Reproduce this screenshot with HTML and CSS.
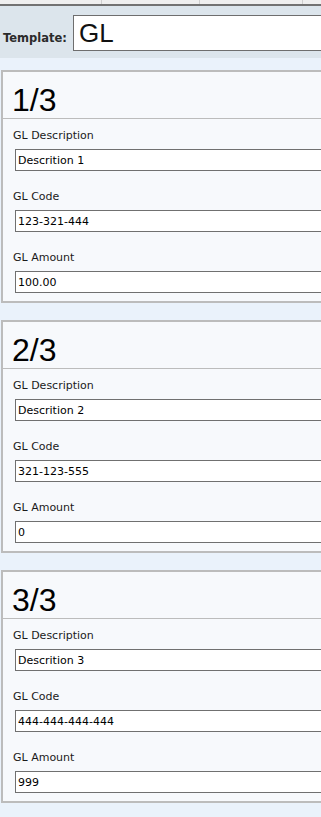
FILE: index.html
```html
<!DOCTYPE html>
<html lang="en">
<head>
  <meta charset="UTF-8" />
  <meta name="viewport" content="width=device-width, initial-scale=1" />
  <title>GL Template</title>
  <link rel="stylesheet" href="styles.css">
</head>
<body>

  <div class="tabs">
    <div class="tab tab-1"></div>
    <div class="tab tab-2"></div>
    <div class="tab tab-3"></div>
  </div>

  <div class="template-bar">
    <label for="template" class="template-label">Template:</label>
    <input type="text" id="template" class="template-input" value="GL" />
  </div>

  <div class="entries">

    <div class="entry">
      <h1 class="entry-title">1/3</h1>
      <div class="entry-fields">
        <label class="field-label">GL Description</label>
        <input type="text" class="field-input" value="Descrition 1" />
        <label class="field-label">GL Code</label>
        <input type="text" class="field-input" value="123-321-444" />
        <label class="field-label">GL Amount</label>
        <input type="text" class="field-input" value="100.00" />
      </div>
    </div>

    <div class="entry">
      <h1 class="entry-title">2/3</h1>
      <div class="entry-fields">
        <label class="field-label">GL Description</label>
        <input type="text" class="field-input" value="Descrition 2" />
        <label class="field-label">GL Code</label>
        <input type="text" class="field-input" value="321-123-555" />
        <label class="field-label">GL Amount</label>
        <input type="text" class="field-input" value="0" />
      </div>
    </div>

    <div class="entry">
      <h1 class="entry-title">3/3</h1>
      <div class="entry-fields">
        <label class="field-label">GL Description</label>
        <input type="text" class="field-input" value="Descrition 3" />
        <label class="field-label">GL Code</label>
        <input type="text" class="field-input" value="444-444-444-444" />
        <label class="field-label">GL Amount</label>
        <input type="text" class="field-input" value="999" />
      </div>
    </div>

  </div>

</body>
</html>
```

FILE: styles.css
```css
/* Base */
* { box-sizing: border-box; }
html, body { overflow: hidden; }
body {
  margin: 0;
  background: #eaf2fb;
  color: #1a1a1a;
  font-family: 'DejaVu Sans', Verdana, sans-serif;
  font-size: 11px;
}

/* Tab strip (mostly scrolled off the top) */
.tabs {
  display: flex;
  height: 6px;
  background: #efefef;
  border-bottom: 2px solid #727272;
}
.tab { border-right: 1px solid #cfcfcf; }
.tab-1 { width: 102px; }
.tab-2 { width: 98px; }
.tab-3 { width: 103px; }

/* Template row */
.template-bar {
  display: flex;
  align-items: baseline;
  gap: 6px;
  background: #dce5ec;
  padding: 9px 0 7px 3px;
  width: 420px;
}
.template-label {
  font-weight: bold;
  font-size: 11.5px;
  color: #2b2b2b;
}
.template-input {
  width: 320px;
  height: 36px;
  margin: 0;
  padding: 0 5px;
  border: 1px solid #6e6e6e;
  background: #fff;
  font-family: 'Liberation Sans', Arial, sans-serif;
  font-size: 26px;
  color: #111;
  outline: none;
}

/* Entry cards */
.entries {
  padding: 12px 0 0 1px;
}
.entry {
  width: 380px;
  margin-bottom: 17px;
  background: #f7f9fc;
  border: 2px solid #bcbcbc;
}
.entry-title {
  margin: 0;
  padding: 11px 0 0 9px;
  height: 47px;
  line-height: 35px;
  font-family: 'Liberation Sans', Arial, sans-serif;
  font-size: 32px;
  font-weight: normal;
  color: #000;
  border-bottom: 1px solid #bcbcbc;
}
.entry-fields {
  display: flex;
  flex-direction: column;
  align-items: flex-start;
  padding: 10px 0 8px 10px;
}
.field-label {
  display: block;
  line-height: 13px;
  margin-bottom: 7px;
  color: #1a1a1a;
}
.field-input {
  width: 340px;
  height: 22px;
  margin: 0 0 19px 2px;
  padding: 0 2px;
  border: 1px solid #707070;
  background: #fff;
  font-family: 'DejaVu Sans', Verdana, sans-serif;
  font-size: 11px;
  color: #000;
  outline: none;
}
.field-input:last-child { margin-bottom: 0; }
```
